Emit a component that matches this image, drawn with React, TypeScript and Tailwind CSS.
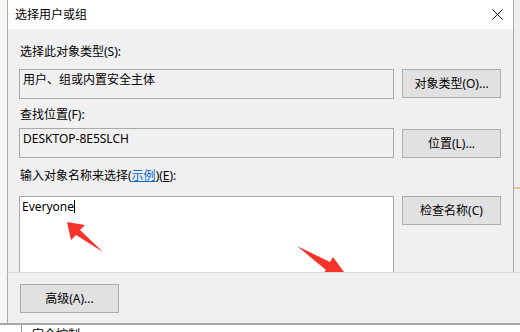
import React from "react";

const font = { fontFamily: '"Noto Sans", "Noto Sans CJK SC", sans-serif' };

const Button = ({ label, className = "" }: { label: string; className?: string }) => (
  <div
    className={`flex h-[29px] w-[99px] shrink-0 items-center justify-center border border-[#adadad] bg-[#e1e1e1] text-[12px] text-black ${className}`}
  >
    {label}
  </div>
);

const ReadBox = ({ value }: { value: string }) => (
  <div className="h-[30px] w-[375px] border border-[#a9a9a9] bg-[#f0f0f0] px-[3px] pt-[2px] text-[12px] leading-[16px] text-black">
    {value}
  </div>
);

// red annotation arrows drawn over the dialog
const Arrows = () => (
  <svg
    className="pointer-events-none absolute left-0 top-0"
    width="520"
    height="272"
    viewBox="0 0 520 272"
  >
    <polygon points="67,222 85,225 80,230 103,252 76,235 71,240" fill="#f5332b" />
    <polygon points="297,246 330,262 333,257 352,283 321,276 326,270" fill="#f5332b" />
  </svg>
);

export default function App() {
  return (
    <div className="relative h-[332px] w-[520px] overflow-hidden bg-[#f7f7f7]" style={font}>
      <div className="relative flex h-[272px] overflow-hidden">
        <div className="w-[7px] shrink-0" />
        <div className="flex w-[507px] shrink-0 flex-col border-x border-[#aaaaaa] bg-[#f0f0f0]">
          <div className="flex h-[29px] items-center justify-between bg-white pl-[7px] pr-[10px]">
            <span className="text-[12px] text-black">选择用户或组</span>
            <svg width="11" height="11" viewBox="0 0 11 11">
              <path d="M0.5 0.5 L10.5 10.5 M10.5 0.5 L0.5 10.5" stroke="#111" strokeWidth="1" />
            </svg>
          </div>
          <div className="flex flex-1 flex-col pl-[11px]">
            <div className="ml-[1px] mt-[15px] text-[12px] leading-[16px]">选择此对象类型(S):</div>
            <div className="mt-[9px] flex gap-[8px]">
              <ReadBox value="用户、组或内置安全主体" />
              <Button label="对象类型(O)..." />
            </div>
            <div className="ml-[1px] mt-[8px] text-[12px] leading-[16px]">查找位置(F):</div>
            <div className="mt-[5px] flex gap-[8px]">
              <ReadBox value="DESKTOP-8E5SLCH" />
              <Button label="位置(L)..." className="mt-[1px]" />
            </div>
            <div className="ml-[1px] mt-[10px] text-[12px] leading-[16px]">
              输入对象名称来选择(
              <span className="text-[#0066cc] underline">示例</span>)(<span className="underline">E</span>):
            </div>
            <div className="mt-[12px] flex flex-1 gap-[8px]">
              <div className="w-[375px] border-x border-t border-[#a9a9a9] bg-white px-[2px] pt-[1px] text-[12px] leading-[16px]">
                Everyone<span className="inline-block h-[13px] w-px translate-y-[2px] bg-black" />
              </div>
              <Button label="检查名称(C)" />
            </div>
          </div>
        </div>
        <div className="relative flex-1 bg-[#eeeeee]">
          <div className="absolute left-0 top-[187px] h-[2px] w-full bg-[#e8c39e]" />
        </div>
        <Arrows />
      </div>
      <div className="flex h-[51px]">
        <div className="w-[7px] shrink-0" />
        <div className="flex-1 border-l border-t border-[#aaaaaa] border-t-[#dcdcdc] bg-[#f0f0f0] pl-[12px] pt-[11px]">
          <Button label="高级(A)..." className="w-[98px]" />
        </div>
      </div>
      <div className="flex h-[9px] border-t-2 border-[#a6a6a6] bg-white">
        <div className="w-[22px] shrink-0 border-r border-[#9a9a9a]" />
        <div className="ml-[10px] pt-[2px] text-[12px] leading-[16px] text-black">完全控制</div>
      </div>
    </div>
  );
}
